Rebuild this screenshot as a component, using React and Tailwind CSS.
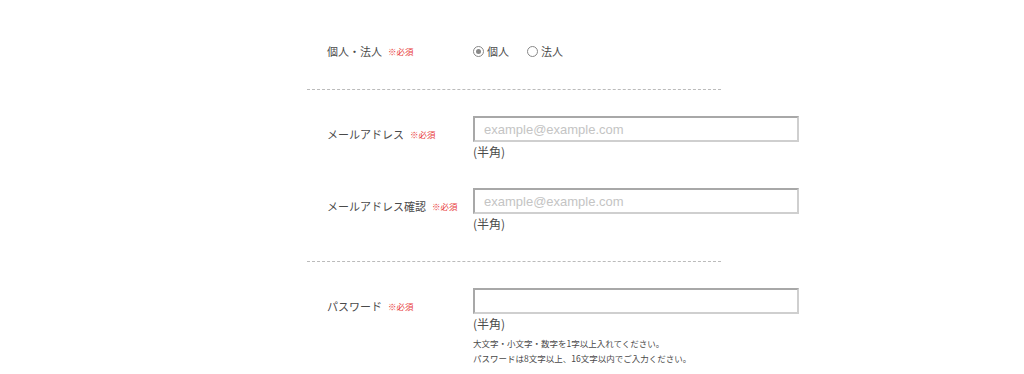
import React from "react";

const font = { fontFamily: '"Noto Sans CJK JP", "Noto Sans", sans-serif' };

function Req() {
  return <span className="ml-[6px] text-[8.5px] text-[#e83c3c] leading-none">※必須</span>;
}

function Label({ children }) {
  return (
    <div className="w-[166px] shrink-0 pl-[20px] pt-[8px] flex items-center h-[28px] text-[11px] text-[#4a4a4a] whitespace-nowrap">
      <span>{children}</span>
      <Req />
    </div>
  );
}

function Field({ placeholder, children }) {
  return (
    <div className="flex flex-col">
      <input
        type="text"
        placeholder={placeholder}
        className="w-[326px] h-[26px] border-2 border-t-[#a8a8a8] border-l-[#a8a8a8] border-r-[#cfcfcf] border-b-[#cfcfcf] bg-white px-[9px] text-[13px] text-[#444] placeholder:text-[#c4c4c4] outline-none"
        style={{ fontFamily: '"Liberation Sans", Arial, sans-serif' }}
      />
      <div className="text-[12px] leading-[20px] text-[#4a4a4a]">(半角)</div>
      {children}
    </div>
  );
}

function Radio({ checked, label }) {
  return (
    <label className="flex items-center gap-[3px] text-[11px] text-[#4a4a4a]">
      <span className="w-[11px] h-[11px] rounded-full border border-[#888] flex items-center justify-center bg-white">
        {checked && <span className="w-[5px] h-[5px] rounded-full bg-[#888]" />}
      </span>
      <span>{label}</span>
    </label>
  );
}

export default function App() {
  return (
    <div className="w-full bg-white" style={font}>
      <div className="mx-auto w-[410px]">
        <div className="flex items-center pt-[41px] pb-[28px]">
          <div className="w-[166px] shrink-0 pl-[20px] flex items-center h-[20px] text-[11px] text-[#4a4a4a] whitespace-nowrap">
            <span>個人・法人</span>
            <Req />
          </div>
          <div className="flex items-center gap-[18px] h-[20px]">
            <Radio checked label="個人" />
            <Radio label="法人" />
          </div>
        </div>
        <div className="w-[414px] border-t border-dashed border-[#bbb]" />
        <div className="flex pt-[26px]">
          <Label>メールアドレス</Label>
          <Field placeholder="example@example.com" />
        </div>
        <div className="flex pt-[26px] pb-[27px]">
          <Label>メールアドレス確認</Label>
          <Field placeholder="example@example.com" />
        </div>
        <div className="w-[414px] border-t border-dashed border-[#bbb]" />
        <div className="flex pt-[26px]">
          <Label>パスワード</Label>
          <Field>
            <div className="pt-[2px] text-[8.5px] leading-[15px] text-[#4a4a4a]">
              <div>大文字・小文字・数字を1字以上入れてください。</div>
              <div>パスワードは8文字以上、16文字以内でご入力ください。</div>
            </div>
          </Field>
        </div>
      </div>
    </div>
  );
}
